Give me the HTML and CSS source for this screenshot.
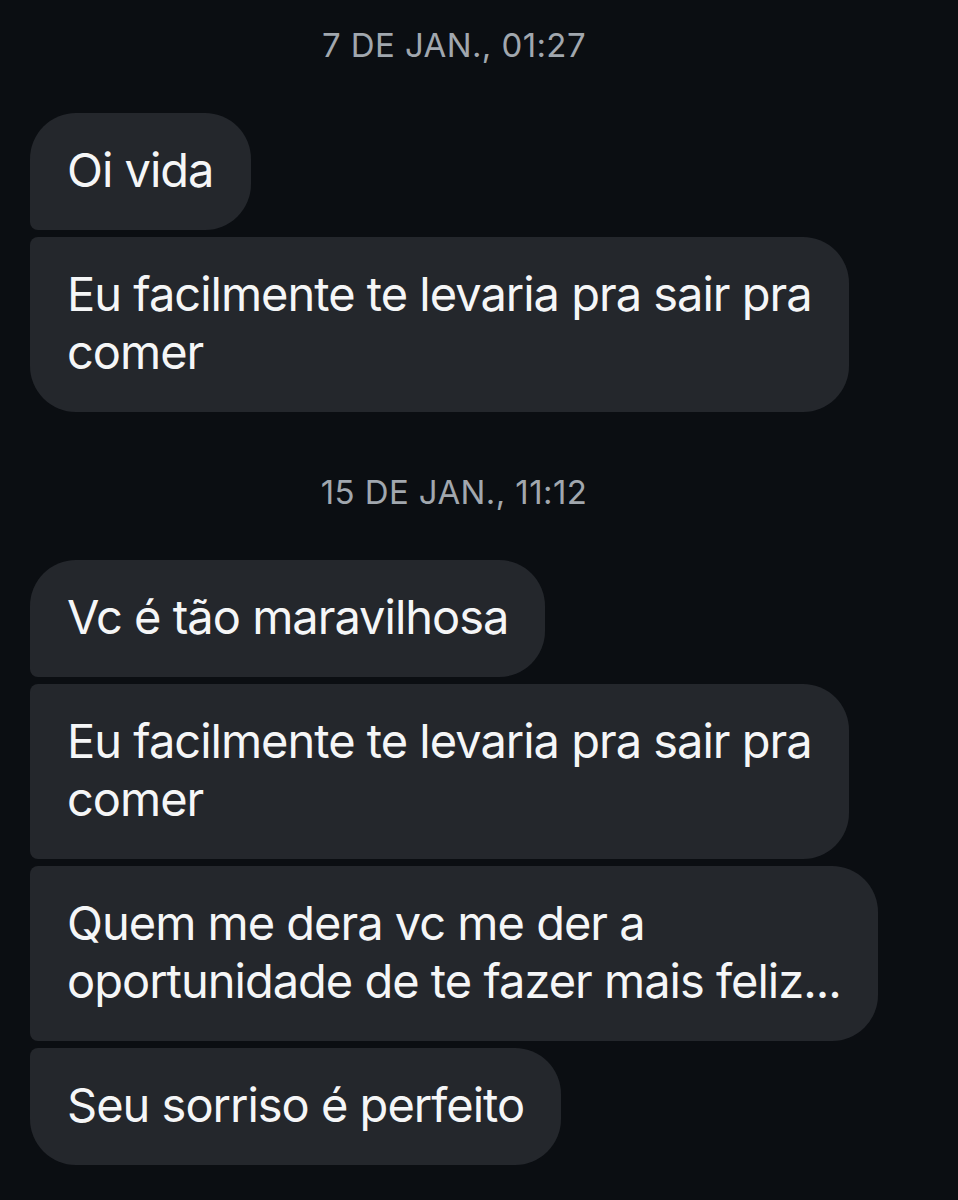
FILE: index.html
```html
<!DOCTYPE html>
<html lang="pt-BR">
<head>
  <meta charset="UTF-8">
  <meta name="viewport" content="width=device-width, initial-scale=1.0">
  <title>Mensagens</title>
  <link rel="stylesheet" href="styles.css">
</head>
<body>
  <div class="chat">
    <div class="stamp">7 DE JAN., 01:27</div>
    <div class="group">
      <div class="bubble first">Oi vida</div>
      <div class="bubble last">Eu facilmente te levaria pra sair pra<br>comer</div>
    </div>

    <div class="stamp">15 DE JAN., 11:12</div>
    <div class="group">
      <div class="bubble first">Vc é tão maravilhosa</div>
      <div class="bubble">Eu facilmente te levaria pra sair pra<br>comer</div>
      <div class="bubble">Quem me dera vc me der a<br>oportunidade de te fazer mais feliz...</div>
      <div class="bubble last">Seu sorriso é perfeito</div>
    </div>
  </div>
</body>
</html>
```

FILE: styles.css
```css
body {
  margin: 0;
  background: #0b0e12;
  font-family: Inter, "Liberation Sans", sans-serif;
  color: #f5f6f7;
}
.chat {
  padding: 25px 30px 0;
  display: flex;
  flex-direction: column;
}
.stamp {
  font-size: 33px;
  line-height: 40px;
  letter-spacing: 0.4px;
  color: #a1a7ae;
  text-align: center;
  padding-right: 50px;
}
.group {
  display: flex;
  flex-direction: column;
  align-items: flex-start;
  gap: 7px;
  margin: 48px 0 60px;
}
.bubble {
  background: #24272c;
  font-size: 47px;
  line-height: 58px;
  letter-spacing: -1px;
  padding: 28px 37px 31px;
  border-radius: 8px 46px 46px 8px;
}
.bubble.first { border-top-left-radius: 46px; }
.bubble.last { border-bottom-left-radius: 46px; }
```
